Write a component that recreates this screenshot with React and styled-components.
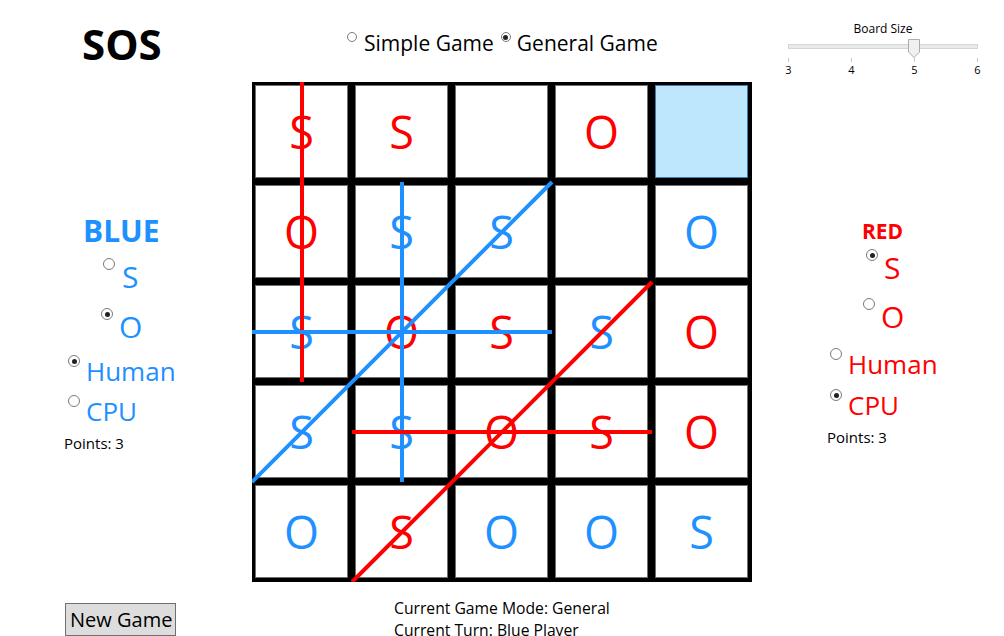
import React from 'react';
import styled, { createGlobalStyle } from 'styled-components';

const BLUE = '#1e90ff';
const RED = '#ff0000';

const GlobalStyle = createGlobalStyle`
  html, body {
    margin: 0;
    padding: 0;
    background: #ffffff;
    overflow: hidden;
  }
  body {
    font-family: 'Open Sans', 'Noto Sans', sans-serif;
    color: #000000;
  }
`;

// board content, row by row: [letter, colour]
const board = [
  [['S', 'r'], ['S', 'r'], null, ['O', 'r'], 'hover'],
  [['O', 'r'], ['S', 'b'], ['S', 'b'], null, ['O', 'b']],
  [['S', 'b'], ['O', 'r'], ['S', 'r'], ['S', 'b'], ['O', 'r']],
  [['S', 'b'], ['S', 'b'], ['O', 'r'], ['S', 'r'], ['O', 'r']],
  [['O', 'b'], ['S', 'r'], ['O', 'b'], ['O', 'b'], ['S', 'b']],
];

// sos lines in board coordinates (500 x 500)
const lines = [
  { x1: 50, y1: 0, x2: 50, y2: 300, c: RED },
  { x1: 150, y1: 100, x2: 150, y2: 400, c: BLUE },
  { x1: 0, y1: 400, x2: 300, y2: 100, c: BLUE },
  { x1: 0, y1: 250, x2: 300, y2: 250, c: BLUE },
  { x1: 100, y1: 500, x2: 400, y2: 200, c: RED },
  { x1: 100, y1: 350, x2: 400, y2: 350, c: RED },
];

const Radio = ({ checked, size = 12, lift = 2, gap = 4, indent = 0, top = 0, color, fontSize, children }) => (
  <Option $gap={gap} $indent={indent} $top={top} $color={color} $fontSize={fontSize}>
    <Dot $size={size} $lift={lift} $checked={checked} />
    <span>{children}</span>
  </Option>
);

const App = () => {
  return (
    <>
      <GlobalStyle />
      <Page>
        <TitleCell>
          <Title>SOS</Title>
        </TitleCell>

        <ModeCell>
          <Radio size={10} lift={3} gap={7} fontSize={21}>Simple Game</Radio>
          <Radio checked size={10} lift={3} gap={6} indent={7} fontSize={21}>General Game</Radio>
        </ModeCell>

        <SliderCell>
          <SliderBox>
            <SliderLabel>Board Size</SliderLabel>
            <TrackArea>
              <Track />
              <Thumb width="12" height="19" viewBox="0 0 12 19">
                <polygon points="0.5,0.5 11.5,0.5 11.5,13 6,18.5 0.5,13" fill="#f0f0f0" stroke="#acacac" />
              </Thumb>
            </TrackArea>
            <TickRow>
              {[3, 4, 5, 6].map((n) => (
                <Tick key={n}>{n}</Tick>
              ))}
            </TickRow>
          </SliderBox>
        </SliderCell>

        <SidePanel $pad={128}>
          <PlayerName $size={30} $color={BLUE} $indent={83}>BLUE</PlayerName>
          <Radio top={5} indent={103} gap={7} color={BLUE} fontSize={30}>S</Radio>
          <Radio checked top={9} indent={101} gap={6} color={BLUE} fontSize={30}>O</Radio>
          <Radio checked top={6} indent={68} gap={6} color={BLUE} fontSize={26}>Human</Radio>
          <Radio top={4} indent={68} gap={6} color={BLUE} fontSize={26}>CPU</Radio>
          <Points $indent={64} $top={4}>Points: 3</Points>
        </SidePanel>

        <Board>
          {board.flat().map((cell, i) => (
            <Cell key={i} $hover={cell === 'hover'}>
              {Array.isArray(cell) && (
                <Letter $color={cell[1] === 'r' ? RED : BLUE}>{cell[0]}</Letter>
              )}
            </Cell>
          ))}
          <Strokes viewBox="0 0 500 500">
            {lines.map((l, i) => (
              <line key={i} x1={l.x1} y1={l.y1} x2={l.x2} y2={l.y2} stroke={l.c} strokeWidth="4" />
            ))}
          </Strokes>
        </Board>

        <SidePanel $pad={135}>
          <PlayerName $size={21} $color={RED} $indent={110}>RED</PlayerName>
          <Radio checked top={2} indent={114} gap={6} color={RED} fontSize={30}>S</Radio>
          <Radio top={8} indent={111} gap={6} color={RED} fontSize={30}>O</Radio>
          <Radio top={9} indent={78} gap={6} color={RED} fontSize={26}>Human</Radio>
          <Radio checked top={5} indent={78} gap={6} color={RED} fontSize={26}>CPU</Radio>
          <Points $indent={75} $top={4}>Points: 3</Points>
        </SidePanel>

        <FooterLeft>
          <NewGame>New Game</NewGame>
        </FooterLeft>
        <Status>
          <div>Current Game Mode: General</div>
          <div>Current Turn: Blue Player</div>
        </Status>
      </Page>
    </>
  );
};

const Page = styled.div`
  width: 1004px;
  height: 636px;
  overflow: hidden;
  display: grid;
  grid-template-columns: 252px 500px 252px;
  grid-template-rows: 82px 500px 54px;
`;

const TitleCell = styled.div`
  padding: 15px 0 0 82px;
`;

const Title = styled.h1`
  margin: 0;
  font-size: 42px;
  font-weight: 700;
  line-height: normal;
`;

const ModeCell = styled.div`
  display: flex;
  align-items: flex-start;
  padding: 29px 0 0 95px;
`;

const Option = styled.label`
  display: flex;
  align-items: flex-start;
  gap: ${(p) => p.$gap}px;
  margin-left: ${(p) => p.$indent}px;
  margin-top: ${(p) => p.$top}px;
  color: ${(p) => p.$color || '#000'};
  font-size: ${(p) => p.$fontSize}px;
  line-height: normal;
  white-space: nowrap;
`;

const Dot = styled.span`
  flex: none;
  box-sizing: border-box;
  width: ${(p) => p.$size}px;
  height: ${(p) => p.$size}px;
  margin-top: ${(p) => p.$lift}px;
  border-radius: 50%;
  border: 1px solid #7a7a7a;
  background: #ffffff;
  display: flex;
  align-items: center;
  justify-content: center;

  &::after {
    content: '';
    display: ${(p) => (p.$checked ? 'block' : 'none')};
    width: ${(p) => Math.round(p.$size * 0.45)}px;
    height: ${(p) => Math.round(p.$size * 0.45)}px;
    border-radius: 50%;
    background: #212121;
  }
`;

const SliderCell = styled.div`
  padding: 21px 0 0 36px;
`;

const SliderBox = styled.div`
  width: 190px;
  display: flex;
  flex-direction: column;
`;

const SliderLabel = styled.div`
  font-size: 12px;
  line-height: 16px;
  text-align: center;
  color: #000;
`;

const TrackArea = styled.div`
  position: relative;
  height: 19px;
  margin-top: 2px;
`;

const Track = styled.div`
  box-sizing: border-box;
  height: 5px;
  margin-top: 5px;
  background: #e7eaea;
  border: 1px solid #d6d6d6;
`;

const Thumb = styled.svg`
  position: absolute;
  top: 0;
  left: 120px;
`;

const TickRow = styled.div`
  display: flex;
  justify-content: space-between;
  margin: 0 -5px;
`;

const Tick = styled.div`
  width: 11px;
  display: flex;
  flex-direction: column;
  align-items: center;
  font-size: 11px;
  line-height: 14px;
  color: #000;

  &::before {
    content: '';
    width: 1px;
    height: 4px;
    margin-bottom: 1px;
    background: #c4c4c4;
  }
`;

const SidePanel = styled.div`
  display: flex;
  flex-direction: column;
  align-items: flex-start;
  padding-top: ${(p) => p.$pad}px;
`;

const PlayerName = styled.div`
  font-size: ${(p) => p.$size}px;
  font-weight: 700;
  line-height: normal;
  color: ${(p) => p.$color};
  margin-left: ${(p) => p.$indent}px;
`;

const Points = styled.div`
  font-size: 15px;
  line-height: normal;
  margin-left: ${(p) => p.$indent}px;
  margin-top: ${(p) => p.$top}px;
`;

const Board = styled.div`
  position: relative;
  box-sizing: border-box;
  width: 500px;
  height: 500px;
  background: #000000;
  padding: 3px 4px 4px 3px;
  display: grid;
  grid-template-columns: repeat(5, 1fr);
  grid-template-rows: repeat(5, 1fr);
  gap: 7px;
`;

const Cell = styled.div`
  box-sizing: border-box;
  border: 1px solid ${(p) => (p.$hover ? '#3c7fb1' : '#707070')};
  background: ${(p) => (p.$hover ? '#bee6fd' : '#ffffff')};
  display: flex;
  align-items: center;
  justify-content: center;
`;

const Letter = styled.span`
  font-size: 45px;
  line-height: 1;
  color: ${(p) => p.$color};
`;

const Strokes = styled.svg`
  position: absolute;
  inset: 0;
  width: 500px;
  height: 500px;
  pointer-events: none;
`;

const FooterLeft = styled.div`
  padding: 21px 0 0 65px;
`;

const NewGame = styled.button`
  font-family: 'Open Sans', 'Noto Sans', sans-serif;
  font-size: 20px;
  line-height: 27px;
  padding: 2px 3px 2px 4px;
  background: #dddddd;
  border: 1px solid #707070;
  color: #000;
`;

const Status = styled.div`
  padding: 15px 0 0 142px;
  font-size: 15.7px;
  line-height: 22px;
`;

export default App;
